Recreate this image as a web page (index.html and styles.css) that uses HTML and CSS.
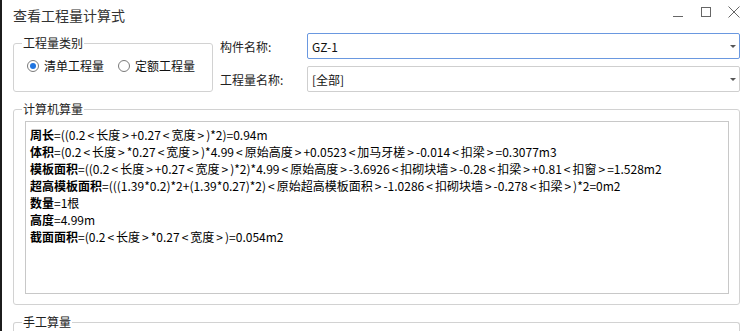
FILE: index.html
```html
<!DOCTYPE html>
<html lang="zh-CN">
<head>
    <meta charset="UTF-8">
    <meta name="viewport" content="width=device-width, initial-scale=1.0">
    <title>查看工程量计算式</title>
    <link rel="stylesheet" href="styles.css">
</head>
<body>
    <div class="titlebar">
        <span class="title">查看工程量计算式</span>
        <div class="win-controls">
            <span class="win-min"></span>
            <span class="win-max"></span>
            <svg class="win-close" width="12" height="12" viewBox="0 0 12 12">
                <path d="M0.5 0.5 L11.5 11.5 M11.5 0.5 L0.5 11.5" stroke="#666" stroke-width="1" fill="none"/>
            </svg>
        </div>
    </div>

    <div class="top-row">
        <fieldset class="group type-group">
            <legend>工程量类别</legend>
            <div class="radio-row">
                <label class="radio checked"><span class="radio-dot"></span>清单工程量</label>
                <label class="radio"><span class="radio-dot"></span>定额工程量</label>
            </div>
        </fieldset>

        <div class="filters">
            <span class="field-label">构件名称:</span>
            <div class="combo focused">
                <span class="combo-text">GZ-1</span>
                <span class="combo-arrow"></span>
            </div>
            <span class="field-label">工程量名称:</span>
            <div class="combo">
                <span class="combo-text">[全部]</span>
                <span class="combo-arrow"></span>
            </div>
        </div>
    </div>

    <fieldset class="group calc-group">
        <legend>计算机算量</legend>
        <div class="formula-box">
            <div class="formula"><b>周长</b>=((0.2<i>&lt;</i>长度<i>&gt;</i>+0.27<i>&lt;</i>宽度<i>&gt;</i>)*2)=0.94m</div>
            <div class="formula"><b>体积</b>=(0.2<i>&lt;</i>长度<i>&gt;</i>*0.27<i>&lt;</i>宽度<i>&gt;</i>)*4.99<i>&lt;</i>原始高度<i>&gt;</i>+0.0523<i>&lt;</i>加马牙槎<i>&gt;</i>-0.014<i>&lt;</i>扣梁<i>&gt;</i>=0.3077m3</div>
            <div class="formula"><b>模板面积</b>=((0.2<i>&lt;</i>长度<i>&gt;</i>+0.27<i>&lt;</i>宽度<i>&gt;</i>)*2)*4.99<i>&lt;</i>原始高度<i>&gt;</i>-3.6926<i>&lt;</i>扣砌块墙<i>&gt;</i>-0.28<i>&lt;</i>扣梁<i>&gt;</i>+0.81<i>&lt;</i>扣窗<i>&gt;</i>=1.528m2</div>
            <div class="formula"><b>超高模板面积</b>=(((1.39*0.2)*2+(1.39*0.27)*2)<i>&lt;</i>原始超高模板面积<i>&gt;</i>-1.0286<i>&lt;</i>扣砌块墙<i>&gt;</i>-0.278<i>&lt;</i>扣梁<i>&gt;</i>)*2=0m2</div>
            <div class="formula"><b>数量</b>=1根</div>
            <div class="formula"><b>高度</b>=4.99m</div>
            <div class="formula"><b>截面面积</b>=(0.2<i>&lt;</i>长度<i>&gt;</i>*0.27<i>&lt;</i>宽度<i>&gt;</i>)=0.054m2</div>
        </div>
    </fieldset>

    <fieldset class="group manual-group">
        <legend>手工算量</legend>
    </fieldset>
</body>
</html>
```

FILE: styles.css
```css
* {
    box-sizing: border-box;
}

body {
    margin: 0;
    width: 740px;
    height: 331px;
    overflow: hidden;
    background: #fff;
    color: #1a1a1a;
    font-family: "Noto Sans CJK SC", "Microsoft YaHei", sans-serif;
    font-size: 12px;
    box-shadow: inset 2px 0 #1c1c1c;
}

/* title bar */
.titlebar {
    height: 30px;
    display: flex;
    align-items: center;
    padding-left: 13px;
}

.title {
    font-size: 14px;
    color: #333;
    line-height: 28px;
}

.win-controls {
    margin-left: auto;
    display: flex;
    align-items: center;
    height: 30px;
    padding-bottom: 6px;
}

.win-min {
    width: 10px;
    height: 1px;
    background: #666;
    margin-top: 9px;
}

.win-max {
    width: 10px;
    height: 10px;
    border: 1px solid #666;
    margin-left: 18px;
}

.win-close {
    flex: none;
    margin-left: 17px;
}

/* group boxes */
.group {
    margin: 0;
    padding: 0 0 0 8px;
    border: 1px solid #d2d2d2;
    border-radius: 3px;
    min-width: 0;
}

.group legend {
    padding: 0 1px;
    line-height: 16px;
    color: #222;
}

/* top area */
.top-row {
    display: flex;
    align-items: flex-start;
    padding-left: 13px;
}

.type-group {
    width: 200px;
    height: 57px;
    margin-top: 5px;
    padding-top: 7px;
}

.radio-row {
    display: flex;
    margin-left: 5px;
    line-height: 16px;
}

.radio {
    display: flex;
    align-items: center;
    color: #111;
}

.radio + .radio {
    margin-left: 14px;
}

.radio-dot {
    width: 12px;
    height: 12px;
    border: 1px solid #7a7a7a;
    border-radius: 50%;
    margin-right: 5px;
    display: flex;
    align-items: center;
    justify-content: center;
}

.radio.checked .radio-dot::after {
    content: "";
    width: 6px;
    height: 6px;
    border-radius: 50%;
    background: #1f74e0;
}

.filters {
    flex: 1;
    display: grid;
    grid-template-columns: 87px 1fr;
    row-gap: 7px;
    align-items: center;
    margin-left: 7px;
    margin-top: 3px;
}

.field-label {
    color: #222;
}

.combo {
    height: 26px;
    border: 1px solid #cfcfcf;
    border-radius: 2px;
    display: flex;
    align-items: center;
    padding: 0 3px 0 4px;
}

.combo.focused {
    border-color: #6a98e0;
}

.combo-text {
    color: #111;
}

.combo-arrow {
    margin-left: auto;
    width: 0;
    height: 0;
    border-left: 3px solid transparent;
    border-right: 3px solid transparent;
    border-top: 3px solid #555;
}

/* computed quantities */
.calc-group {
    margin: 9px 0 0 13px;
    width: 727px;
    height: 204px;
    padding-top: 4px;
}

.formula-box {
    margin: 0 10px 0 3px;
    height: 173px;
    border: 1px solid #c8c8c8;
    padding: 4px 4px;
}

.formula {
    line-height: 17px;
    white-space: nowrap;
    color: #000;
}

.formula b {
    font-weight: bold;
}

/* angle brackets are spaced out like the desktop font */
.formula i {
    font-style: normal;
    padding: 0 2px;
}

.manual-group {
    margin: 9px 0 0 13px;
    width: 727px;
    height: 18px;
    border-bottom-width: 0;
    border-radius: 3px 3px 0 0;
}
```
